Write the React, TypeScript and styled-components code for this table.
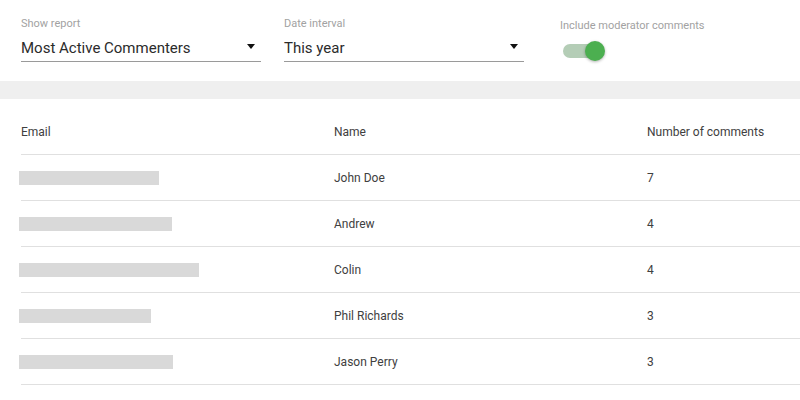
import * as React from 'react'
import styled, { createGlobalStyle } from 'styled-components'

const GlobalStyle = createGlobalStyle`
  html, body {
    margin: 0;
    padding: 0;
    background: #ffffff;
    font-family: Roboto, "Noto Sans", "Liberation Sans", sans-serif;
    overflow: hidden;
  }
`

const Page = styled.div`
  width: 800px;
  height: 400px;
  overflow: hidden;
  background: #ffffff;
`

const Filters = styled.div`
  display: flex;
  align-items: flex-start;
  gap: 23px;
  padding: 17px 0 0 21px;
  height: 64px;
`

const Field = styled.div<{ width?: number }>`
  display: flex;
  flex-direction: column;
  width: ${({ width }) => (width ? `${width}px` : 'auto')};
`

const FieldLabel = styled.div`
  font-size: 11px;
  line-height: 14px;
  color: #a2a2a2;
  white-space: nowrap;
`

const SelectBox = styled.div`
  position: relative;
  display: flex;
  align-items: center;
  height: 31px;
  padding-top: 3px;
  box-sizing: border-box;
  border-bottom: 1px solid #9a9a9a;
  font-size: 15px;
  color: #2b2b2b;
`

const Caret = styled.span`
  position: absolute;
  right: 6px;
  top: 13px;
  width: 0;
  height: 0;
  border-left: 4px solid transparent;
  border-right: 4px solid transparent;
  border-top: 5px solid #111111;
`

const ToggleField = styled(Field)`
  margin-left: 13px;
  margin-top: 2px;
`

const Track = styled.div<{ on: boolean }>`
  position: relative;
  width: 36px;
  height: 14px;
  margin: 11px 0 0 3px;
  border-radius: 7px;
  background: ${({ on }) => (on ? '#b4cdb6' : '#c4c4c4')};
`

const Knob = styled.div<{ on: boolean }>`
  position: absolute;
  top: -3px;
  left: ${({ on }) => (on ? '22px' : '-4px')};
  width: 20px;
  height: 20px;
  border-radius: 50%;
  background: ${({ on }) => (on ? '#4caf50' : '#f5f5f5')};
  box-shadow: 0 1px 3px rgba(0, 0, 0, 0.3);
`

const Band = styled.div`
  height: 18px;
  background: #efefef;
`

const Table = styled.div`
  margin-left: 21px;
`

const Row = styled.div<{ header?: boolean }>`
  display: grid;
  grid-template-columns: 313px 313px 1fr;
  align-items: center;
  padding: ${({ header }) => (header ? '25px 0 14px' : '15px 0 14px')};
  border-bottom: 1px solid #e0e0e0;
`

const Cell = styled.div`
  font-size: 12px;
  line-height: 16px;
  color: #404040;
  white-space: nowrap;
`

const Redacted = styled.div<{ width: number }>`
  width: ${({ width }) => width}px;
  height: 14px;
  margin-left: -2px;
  background: #d9d9d9;
`

const rows = [
  { bar: 140, name: 'John Doe', count: 7 },
  { bar: 153, name: 'Andrew', count: 4 },
  { bar: 180, name: 'Colin', count: 4 },
  { bar: 132, name: 'Phil Richards', count: 3 },
  { bar: 154, name: 'Jason Perry', count: 3 },
]

const Select = ({ label, value }: { label: string; value: string }) => (
  <Field width={240}>
    <FieldLabel>{label}</FieldLabel>
    <SelectBox>
      {value}
      <Caret />
    </SelectBox>
  </Field>
)

export default function App() {
  const [moderators, setModerators] = React.useState(true)

  return (
    <Page>
      <GlobalStyle />
      <Filters>
        <Select label="Show report" value="Most Active Commenters" />
        <Select label="Date interval" value="This year" />
        <ToggleField>
          <FieldLabel>Include moderator comments</FieldLabel>
          <Track on={moderators} onClick={() => setModerators(!moderators)}>
            <Knob on={moderators} />
          </Track>
        </ToggleField>
      </Filters>
      <Band />
      <Table>
        <Row header>
          <Cell>Email</Cell>
          <Cell>Name</Cell>
          <Cell>Number of comments</Cell>
        </Row>
        {rows.map((row) => (
          <Row key={row.name}>
            <Redacted width={row.bar} />
            <Cell>{row.name}</Cell>
            <Cell>{row.count}</Cell>
          </Row>
        ))}
      </Table>
    </Page>
  )
}
